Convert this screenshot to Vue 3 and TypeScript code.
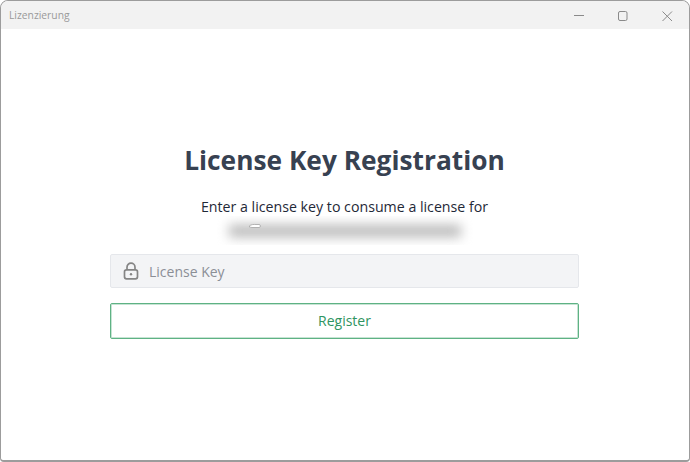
<script setup lang="ts">
const title = 'Lizenzierung'
</script>

<template>
  <div class="window">
    <header class="titlebar">
      <span class="app-name">{{ title }}</span>
      <div class="controls">
        <svg class="ctl" width="44" height="28" viewBox="0 0 44 28"><path d="M17 14.500h10" /></svg>
        <svg class="ctl" width="44" height="28" viewBox="0 0 44 28"><rect x="17.500" y="10.500" width="8.500" height="9" rx="1.500" /></svg>
        <svg class="ctl" width="44" height="28" viewBox="0 0 44 28"><path d="M17.500 10.500l9.500 9.500M27 10.500l-9.500 9.500" /></svg>
      </div>
    </header>
    <main class="content">
      <h1 class="heading">License Key Registration</h1>
      <p class="lead">Enter a license key to consume a license for</p>
      <div class="redacted">
        <div class="smear"></div>
        <svg class="cursor" width="14" height="6" viewBox="0 0 14 6"><path d="M1 3.500C3 1 6 1.500 8 1.500h3.500c1 0 1 3 0 3H4C3 4.500 2 4 1 3.500z" /></svg>
      </div>
      <label class="field">
        <svg class="lock" width="16" height="18" viewBox="0 0 16 18">
          <path class="shackle" d="M4 8V5.200a4 4 0 0 1 8 0V8" />
          <rect class="body" x="1.500" y="7.800" width="13" height="9" rx="2" />
          <circle class="pin" cx="8" cy="12.300" r="1.200" />
        </svg>
        <input class="input" type="text" placeholder="License Key" />
      </label>
      <button class="register" type="button">Register</button>
    </main>
  </div>
</template>

<style>
html, body { margin: 0; background: #fff; }
</style>

<style scoped>
.window {
  box-sizing: border-box;
  width: 690px;
  height: 462px;
  display: flex;
  flex-direction: column;
  background: #fff;
  border: 1px solid #9c9c9c;
  border-bottom-width: 2px;
  border-radius: 8px 8px 4px 4px;
  overflow: hidden;
  font-family: "Open Sans", "Noto Sans", sans-serif;
}
.titlebar {
  flex: none;
  height: 28px;
  display: flex;
  align-items: center;
  justify-content: space-between;
  background: #f2f2f2;
  padding-left: 8px;
}
.app-name {
  font-size: 10.300px;
  color: #9a9a9a;
}
.controls { display: flex; }
.ctl { fill: none; stroke: #8a8a8a; stroke-width: 1; }
.content {
  flex: 1;
  display: flex;
  flex-direction: column;
  align-items: center;
  padding: 112px 110px 0 109px;
}
.heading {
  margin: 0;
  font-size: 26.300px;
  line-height: 38px;
  font-weight: 700;
  color: #374151;
}
.lead {
  margin: 16px 0 0;
  font-size: 14.200px;
  line-height: 23px;
  color: #1f2937;
}
.redacted {
  position: relative;
  width: 256px;
  height: 29px;
  margin-top: -2px;
  margin-bottom: -3px;
  overflow: hidden;
}
.smear {
  margin: 9px 12px;
  height: 12px;
  background: #b8b8b8;
  filter: blur(6px);
}
.cursor {
  position: absolute;
  left: 31px;
  top: 7px;
  fill: #fff;
  stroke: #9a9a9a;
  stroke-width: 0.700;
}
.field {
  box-sizing: border-box;
  width: 100%;
  height: 34px;
  margin-top: 12px;
  display: flex;
  align-items: center;
  gap: 10px;
  padding-left: 12px;
  background: #f3f4f6;
  border: 1px solid #e5e7eb;
  border-radius: 2px;
}
.lock { flex: none; fill: none; stroke: #858585; stroke-width: 1.700; }
.pin { fill: #858585; stroke: none; }
.input {
  flex: 1;
  min-width: 0;
  border: 0;
  outline: 0;
  padding: 0;
  background: transparent;
  font: inherit;
  font-size: 14px;
  color: #374151;
}
.input::placeholder { color: #8b8f96; opacity: 1; }
.register {
  box-sizing: border-box;
  width: 100%;
  height: 36px;
  margin-top: 15px;
  background: #fff;
  border: 1px solid #5eb284;
  box-shadow: inset 0 0 0 1px rgba(94, 178, 132, 0.35);
  border-radius: 2px;
  font: inherit;
  font-size: 14px;
  line-height: 1;
  color: #2f9461;
}
</style>
